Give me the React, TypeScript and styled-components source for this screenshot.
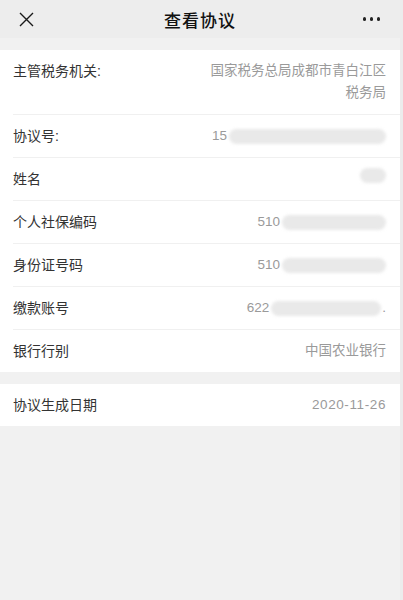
import styled, { createGlobalStyle } from 'styled-components';

const GlobalStyle = createGlobalStyle`
  html, body {
    margin: 0;
    padding: 0;
    background: #f1f1f1;
    font-family: "Liberation Sans", "Noto Sans CJK SC", sans-serif;
  }
`;

const Page = styled.div`
  width: 400px;
  min-height: 600px;
  background: #f1f1f1;
  border-right: 3px solid #ececec;
`;

const NavBar = styled.div`
  height: 38px;
  background: #ededed;
  display: grid;
  grid-template-columns: 60px 1fr 60px;
  align-items: center;
`;

const NavIcon = styled.div<{ $align: 'left' | 'right' }>`
  display: flex;
  justify-content: ${p => (p.$align === 'left' ? 'flex-start' : 'flex-end')};
  padding: ${p => (p.$align === 'left' ? '0 0 0 19px' : '0 20px 0 0')};
  align-items: center;
`;

const NavTitle = styled.div`
  text-align: center;
  font-size: 17px;
  font-weight: 500;
  color: #111;
  letter-spacing: 1px;
`;

const Dots = styled.div`
  display: flex;
  gap: 3.5px;
  span {
    width: 3.5px;
    height: 3.5px;
    border-radius: 50%;
    background: #222;
  }
`;

const Section = styled.div<{ $gap: number }>`
  background: #fff;
  margin-top: ${p => p.$gap}px;
  padding-left: 13px;
`;

const Row = styled.div`
  display: flex;
  justify-content: space-between;
  align-items: flex-start;
  padding: 10px 14px 10px 0;
  line-height: 22px;
  border-bottom: 1px solid #f0f0f0;
  &:last-child {
    border-bottom: none;
  }
`;

const Label = styled.div`
  font-size: 14px;
  color: #333;
  white-space: nowrap;
`;

const Value = styled.div<{ $digits?: boolean }>`
  font-size: 13.5px;
  color: #9a9a9a;
  text-align: right;
  max-width: 180px;
  display: flex;
  align-items: center;
  justify-content: flex-end;
  flex-wrap: wrap;
  letter-spacing: ${p => (p.$digits ? '0.6px' : '0')};
`;

const Masked = styled.span<{ $w: number }>`
  display: inline-block;
  width: ${p => p.$w}px;
  height: 15px;
  background: #e9e9e9;
  border-radius: 8px;
  filter: blur(1.5px);
  margin-left: 2px;
`;

const Tail = styled.span`
  margin-left: 1px;
`;

type Item = { label: string; value?: string; mask?: number; tail?: string };

const items: Item[] = [
  { label: '协议号:', value: '15', mask: 157 },
  { label: '姓名', mask: 26 },
  { label: '个人社保编码', value: '510', mask: 104 },
  { label: '身份证号码', value: '510', mask: 104 },
  { label: '缴款账号', value: '622', mask: 110, tail: '.' },
  { label: '银行行别', value: '中国农业银行' },
];

function CloseIcon() {
  return (
    <svg width="15" height="15" viewBox="0 0 15 15">
      <path d="M1 1 L14 14 M14 1 L1 14" stroke="#1a1a1a" strokeWidth="1.4" fill="none" />
    </svg>
  );
}

export default function App() {
  return (
    <Page>
      <GlobalStyle />
      <NavBar>
        <NavIcon $align="left">
          <CloseIcon />
        </NavIcon>
        <NavTitle>查看协议</NavTitle>
        <NavIcon $align="right">
          <Dots>
            <span />
            <span />
            <span />
          </Dots>
        </NavIcon>
      </NavBar>

      <Section $gap={12}>
        <Row>
          <Label>主管税务机关:</Label>
          <Value>国家税务总局成都市青白江区税务局</Value>
        </Row>
        {items.map(it => (
          <Row key={it.label}>
            <Label>{it.label}</Label>
            <Value>
              {it.value}
              {it.mask ? <Masked $w={it.mask} /> : null}
              {it.tail ? <Tail>{it.tail}</Tail> : null}
            </Value>
          </Row>
        ))}
      </Section>

      <Section $gap={12}>
        <Row>
          <Label>协议生成日期</Label>
          <Value $digits>2020-11-26</Value>
        </Row>
      </Section>
    </Page>
  );
}
